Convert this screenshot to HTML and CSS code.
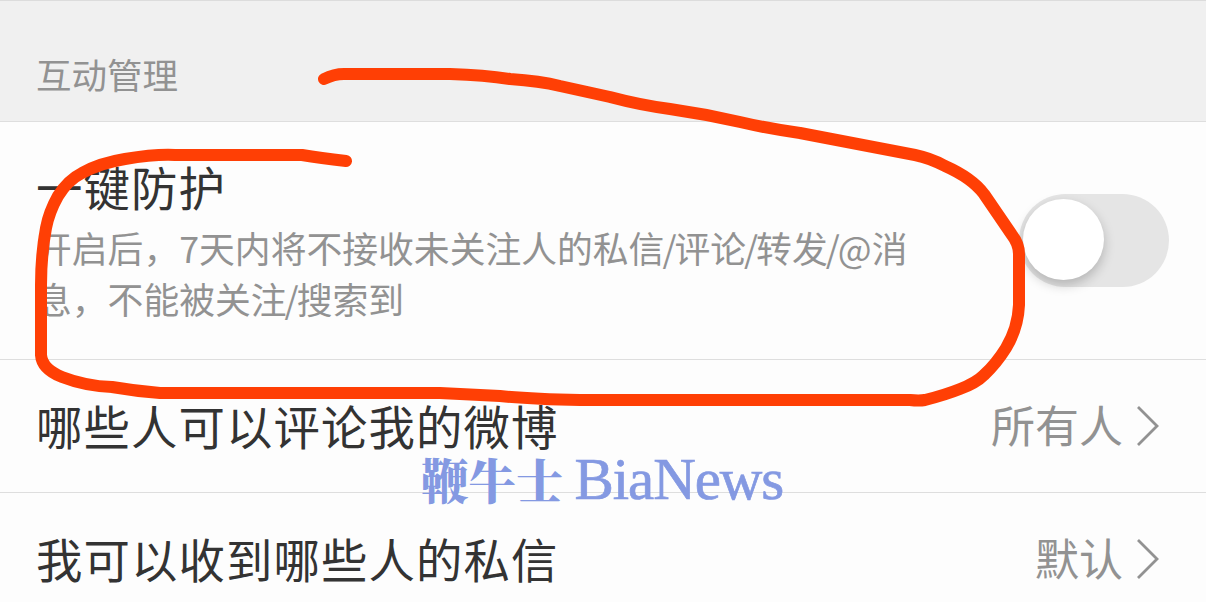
FILE: index.html
```html
<!DOCTYPE html>
<html lang="zh-CN">
<head>
<meta charset="UTF-8">
<meta name="viewport" content="width=device-width, initial-scale=1.0">
<title>互动管理</title>
<link rel="stylesheet" href="styles.css">
</head>
<body>
  <div class="page">
    <div class="section-header">互动管理</div>

    <div class="row protect">
      <div class="text">
        <div class="title">一键防护</div>
        <p class="desc">开启后，7天内将不接收未关注人的私信<span class="mark">/</span>评论<span class="mark">/</span>转发<span class="mark">/</span><span class="at">@</span>消<br>息，不能被关注<span class="mark">/</span>搜索到</p>
      </div>
      <div class="switch"><div class="knob"></div></div>
    </div>

    <div class="row">
      <div class="title">哪些人可以评论我的微博</div>
      <div class="value">
        所有人
        <svg class="arrow" viewBox="0 0 22 40"><path d="M1 1 L20 20 L1 39"/></svg>
      </div>
    </div>

    <div class="row last">
      <div class="title">我可以收到哪些人的私信</div>
      <div class="value">
        默认
        <svg class="arrow" viewBox="0 0 22 40"><path d="M1 1 L20 20 L1 39"/></svg>
      </div>
    </div>

    <!-- hand drawn circle -->
    <svg class="marker" viewBox="0 0 1206 602">
      <path d="M324 79 Q334 74 344 74 H450 Q485 75 510 79 Q540 81 560 86 L610 97 Q640 105 670 109 Q705 114 740 122 Q770 129 800 133 L915 155 Q930 158 945 166 Q972 178 984 194 L1012 235 Q1019 244 1019 254 V305 Q1018 328 1006 348 Q996 364 984 375 Q976 383 960 389 Q945 395 925 400 Q919 401 910 400 H580 Q530 399 500 396 L440 393 H160 Q135 391 112 387 Q85 386 62 377 Q42 369 41 355 V285 Q41 255 46 228 Q49 212 58 196 Q68 180 82 173 Q100 163 125 159 Q155 154 175 155 H302 Q320 158 346 161"/>
    </svg>

    <div class="watermark"><span class="cn">鞭牛士</span><span class="en">BiaNews</span></div>
  </div>
</body>
</html>
```

FILE: styles.css
```css
* {
  box-sizing: border-box;
}

body {
  margin: 0;
  background-color: #fdfdfd;
  font-family: "Noto Sans CJK SC", sans-serif;
  color: #333;
}

.page {
  position: relative;
  height: 602px;
  overflow: hidden;
}

.section-header {
  height: 122px;
  padding: 47px 36px 0;
  border-top: 1px solid #dcdcdc;
  border-bottom: 1px solid #dedede;
  background-color: #f0f0f0;
  color: #929292;
  font-size: 35.5px;
  line-height: 52px;
}

.row {
  display: flex;
  justify-content: space-between;
  align-items: center;
  height: 133px;
  padding: 0 47px 0 36px;
  border-bottom: 1px solid #dedede;
}

.protect {
  height: 238px;
  padding-right: 37px;
}

.protect .text {
  padding-top: 4px;
}

.last {
  border-bottom: none;
}

.title {
  margin-top: -3px;
  font-size: 46.4px;
  letter-spacing: 1.1px;
  line-height: 50px;
  white-space: nowrap;
}

.protect .title {
  margin-top: 0;
}

.desc {
  margin: 11px 0 0;
  color: #929292;
  font-size: 35.8px;
  line-height: 51px;
  white-space: nowrap;
}

.mark {
  margin: 0 -2px;
}

.switch {
  width: 150px;
  height: 93px;
  padding: 5px 4px;
  border-radius: 47px;
  background-color: #e5e5e5;
}

.knob {
  width: 81px;
  height: 81px;
  border-radius: 50%;
  background-color: #fff;
  box-shadow: 0 5px 12px rgba(0, 0, 0, 0.22);
}

.value {
  display: flex;
  align-items: center;
  gap: 14px;
  margin-top: -5px;
  color: #929292;
  font-size: 44px;
  line-height: 60px;
}

.arrow {
  width: 22px;
  height: 40px;
  margin-top: 4px;
  fill: none;
  stroke: #929292;
  stroke-width: 2.8;
}

.marker {
  position: absolute;
  top: 0;
  left: 0;
  width: 1206px;
  height: 602px;
  fill: none;
  stroke: #ff3f05;
  stroke-width: 12;
  stroke-linecap: round;
  stroke-linejoin: round;
}

.watermark {
  position: absolute;
  top: 456px;
  left: 421px;
  display: flex;
  align-items: baseline;
  gap: 11px;
  color: #8499e2;
  line-height: 46px;
  white-space: nowrap;
}

.cn {
  font-family: "Noto Serif CJK SC", "Noto Sans CJK SC", serif;
  font-size: 47.5px;
  font-weight: 900;
}

.en {
  font-family: "Liberation Serif", serif;
  font-size: 59px;
  letter-spacing: -1.1px;
  -webkit-text-stroke: 0.7px #8499e2;
}
```
